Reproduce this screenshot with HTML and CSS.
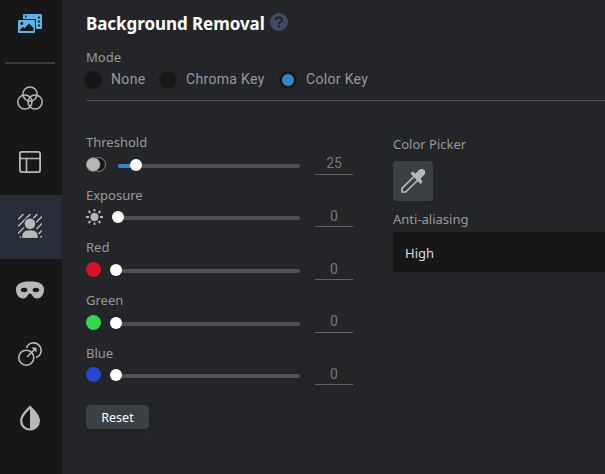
FILE: index.html
```html
<!DOCTYPE html>
<html lang="en">
<head>
<meta charset="utf-8">
<title>Background Removal</title>
<link rel="stylesheet" href="styles.css">
</head>
<body>
<div class="app">
  <nav class="sidebar">
    <div class="nav-top">
      <svg width="24" height="20" viewBox="0 0 24 20"><path fill="#5cb3e6" fill-rule="evenodd" d="M6 0h17q1 0 1 1v13q0 1-1 1h-5V6q0-1-1-1H5V1q0-1 1-1zM7 1.500v2h1.500v-2zM20 2.500v2h1.800v-2zM20 6.500v2h1.800v-2zM20 10.500v2h1.800v-2z"/><path fill="#5cb3e6" fill-rule="evenodd" d="M1 6h15q1 0 1 1v11q0 1-1 1H1q-1 0-1-1V7q0-1 1-1zM3.800 8a1.500 1.500 0 1 0 .01 0zM2 17h13.500v-3L11 9.500l-4.500 4.800-1.500-1.300L2 15.500z"/></svg>
    </div>
    <div class="nav-item">
      <svg width="26" height="24" viewBox="0 0 26 24" fill="none" stroke="#b8b8b8" stroke-width="1.500"><circle cx="13" cy="8" r="7.100"/><circle cx="7.900" cy="16" r="7.100"/><circle cx="18.100" cy="16" r="7.100"/></svg>
    </div>
    <div class="nav-item">
      <svg width="22" height="22" viewBox="0 0 22 22" fill="none" stroke="#b8b8b8"><rect x=".9" y=".9" width="20.200" height="20.200" rx="2" stroke-width="1.800"/><path d="M1 7.500h20M7.500 8v13" stroke-width="1.600"/></svg>
    </div>
    <div class="nav-item selected">
      <svg width="24" height="24" viewBox="0 0 24 24"><path stroke="#b8b8b8" stroke-width="1.500" d="M0 5.500L5.500 0M0 12.500L12.500 0M0 19.500L6 13.500M15 4.500L19.500 0M18 8.500L24 2.500M18.500 15L24 9.500M20.500 20L24 16.500M2 23.500l1-1M22.500 23.500L24 22"/><circle cx="12" cy="9.500" r="6.200" fill="#262d39"/><circle cx="12" cy="9.700" r="5.300" fill="#b8b8b8"/><path fill="#b8b8b8" stroke="#262d39" stroke-width=".5" d="M4 24.300v-2Q4 16 12 16t8 6.300v2z"/></svg>
    </div>
    <div class="nav-item">
      <svg width="28" height="18" viewBox="0 0 28 18"><path fill="#b8b8b8" fill-rule="evenodd" d="M14 .5C23 .5 28 3 28 8.500c0 5-3 9-7 9-3 0-4-2-5.300-4-.8-1.200-2.600-1.200-3.400 0C11 15.500 10 17.500 7 17.500c-4 0-7-4-7-9C0 3 5 .5 14 .5zM4.500 9q.8 2.300 3.600 2.300T11.700 9Q10.900 6.700 8.100 6.700T4.500 9zM16.300 9q.8 2.300 3.600 2.300T23.500 9Q22.700 6.700 19.900 6.700T16.300 9z"/></svg>
    </div>
    <div class="nav-item">
      <svg width="24" height="24" viewBox="0 0 24 24" fill="none" stroke="#b8b8b8" stroke-width="1.600"><circle cx="8.300" cy="15.700" r="7.500"/><path d="M8.500 6A7.500 7.500 0 1 1 18 15.500M9 15L17 7"/><path d="M13.500 5.500H18.500V10.500z" fill="#b8b8b8" stroke="none"/></svg>
    </div>
    <div class="nav-item">
      <svg width="22" height="26" viewBox="0 0 22 26"><path fill="#b8b8b8" fill-rule="evenodd" d="M11 .5C15 4.500 21 10 21 16a10 9.500 0 0 1-20 0C1 10 7 4.500 11 .5zM11 4C7 8 3.300 11.800 3.300 16a7.700 7.400 0 0 0 7.700 7.400z"/></svg>
    </div>
  </nav>
  <main class="panel">
    <h1 class="title">Background Removal
      <svg width="18" height="18" viewBox="0 0 18 18"><circle cx="9" cy="9" r="9" fill="#414b68"/><path d="M6 7Q6 4.300 9 4.300T12 7Q12 8.300 10.500 9T9 11.200" fill="none" stroke="#20232b" stroke-width="1.900"/><rect x="8" y="12.300" width="2" height="2" fill="#20232b"/></svg>
    </h1>
    <div class="label mode-label">Mode</div>
    <div class="modes">
      <label class="mode none"><i class="radio"></i><span>None</span></label>
      <label class="mode chroma"><i class="radio"></i><span>Chroma Key</span></label>
      <label class="mode"><i class="radio checked"></i><span>Color Key</span></label>
    </div>
    <div class="columns">
      <section class="sliders">
        <div class="setting">
          <div class="label">Threshold</div>
          <div class="control">
            <svg class="wide-icon" width="20" height="16" viewBox="0 0 20 16"><circle cx="12.500" cy="7.500" r="7" fill="#171717" stroke="#888" stroke-width="1"/><circle cx="7.500" cy="7.500" r="7.500" fill="#171717"/><circle cx="7.200" cy="7.500" r="6.700" fill="#b8b8b8" stroke="#999"/></svg>
            <div class="track far"><i class="fill"></i><i class="thumb"></i></div>
            <div class="value">25</div>
          </div>
        </div>
        <div class="setting tall low-label">
          <div class="label">Exposure</div>
          <div class="control">
            <svg class="wide-icon" width="18" height="16" viewBox="0 0 18 16"><circle cx="8.500" cy="8" r="4" fill="#b8b8b8"/><path d="M8.500 0v2.500M8.500 13.500V16M0 8h3M14 8h3M2.500 2l2 2M12.500 12l2 2M14.500 2l-2 2M4.500 12l-2 2" stroke="#b8b8b8" stroke-width="1.800"/></svg>
            <div class="track far"><i class="thumb"></i></div>
            <div class="value low">0</div>
          </div>
        </div>
        <div class="setting tall">
          <div class="label">Red</div>
          <div class="control"><i class="dot red"></i><div class="track"><i class="thumb"></i></div><div class="value low">0</div></div>
        </div>
        <div class="setting">
          <div class="label">Green</div>
          <div class="control"><i class="dot green"></i><div class="track"><i class="thumb"></i></div><div class="value">0</div></div>
        </div>
        <div class="setting low-label">
          <div class="label">Blue</div>
          <div class="control"><i class="dot blue"></i><div class="track"><i class="thumb"></i></div><div class="value low">0</div></div>
        </div>
        <button class="reset">Reset</button>
      </section>
      <section class="options">
        <div class="label">Color Picker</div>
        <button class="picker">
          <svg width="24" height="24" viewBox="0 0 24 24"><path d="M14 6.500L1 19.300V23h3.700L18 10" fill="none" stroke="#b8b8b8" stroke-width="1.700"/><path fill="#b8b8b8" d="M9.500 4.500l2-2 3 2L18 1q3-2.300 5.200 0t0 5L19.500 9.500l2 3.500-2 2z"/></svg>
        </button>
        <div class="label aliasing">Anti-aliasing</div>
        <div class="select">High</div>
      </section>
    </div>
  </main>
</div>
</body>
</html>
```
FILE: styles.css
```css
* { box-sizing: border-box; }
body { margin: 0; background: #242529; color: #999; font-family: "Noto Sans", sans-serif; font-size: 13px; overflow: hidden; }
svg { display: block; flex: none; }
button { border: 0; padding: 0; font: inherit; }
.app { display: flex; width: 605px; height: 474px; }
.sidebar { width: 62px; flex: none; background: #171717; }
.nav-top { height: 67px; padding: 14px 0 0 18px; }
.nav-top::after { content: ""; display: block; width: 50px; height: 2px; margin: 28px 0 0 -13px; background: #3d3d3d; }
.nav-item { height: 64px; display: flex; align-items: center; justify-content: center; padding: 0 2px 2px 0; }
.nav-item.selected { background: #262d39; }
.panel { flex: 1; min-width: 0; padding: 11px 0 0 24px; }
.title { display: flex; gap: 5px; align-items: center; height: 24px; margin: 0; color: #fff; font-size: 17px; font-weight: 700; letter-spacing: -.06px; white-space: nowrap; }
.title svg { margin-top: -2px; }
.label { height: 20px; line-height: 20px; white-space: nowrap; }
.mode-label { margin-top: 12px; }
.modes { display: flex; height: 33px; padding-top: 3px; margin-left: -2px; font: 14px/18px Roboto, sans-serif; letter-spacing: .33px; }
.mode { display: flex; height: 18px; gap: 9px; white-space: nowrap; }
.mode.none { width: 75px; }
.mode.chroma { width: 120px; }
.radio { width: 18px; height: 18px; border-radius: 50%; background: #171717; flex: none; margin-top: 1px; }
.radio.checked { background: #3388ca; border: 3px solid #171717; }
.columns { display: flex; border-top: 1px solid #48494b; height: 374px; padding-top: 31px; }
.sliders { width: 307px; flex: none; }
.setting { height: 52px; }
.setting.tall { height: 53px; }
.setting:nth-child(1) { height: 52px; }
.setting:nth-child(4) { height: 52px; }
.low-label .label { padding-top: 1px; }
.control { display: flex; width: 267px; height: 23px; align-items: center; }
.wide-icon { margin-top: 2px; }
.track { position: relative; flex: 1; height: 4px; margin: 5px 15px 0; border-radius: 2px; background: #505154; }
.far { margin-left: auto; flex: 0 0 182px; }
.thumb { position: absolute; left: -6px; top: -5px; width: 12px; height: 12px; border-radius: 50%; background: #fff; }
.fill { position: absolute; left: 0; top: 0; width: 18px; height: 4px; border-radius: 2px; background: #3388ca; }
.fill + .thumb { left: 12px; }
.dot { width: 15px; height: 15px; border-radius: 50%; flex: none; margin-top: 2px; }
.red { background: #d51227; }
.green { background: #31d84b; }
.blue { background: #2945d5; }
.value { width: 38px; height: 23px; flex: none; border-bottom: 1px solid #616265; color: #777; text-align: center; font: 14px/22px Roboto, sans-serif; }
.value.low { line-height: 24px; }
.reset { display: block; width: 63px; height: 24px; margin-top: 11px; border-radius: 4px; background: #3a4043; color: #fff; box-shadow: 0 2px 4px #0003; font-size: 12.500px; line-height: 26px; }
.options { flex: 1; padding-top: 2px; }
.picker { display: flex; width: 40px; height: 40px; margin-top: 7px; align-items: center; justify-content: center; background: #394043; border-radius: 4px; }
.aliasing { margin-top: 8px; }
.select { height: 40px; margin-top: 3px; padding-left: 12px; border-radius: 3px 0 0 3px; background: #171717; color: #ddd; line-height: 43px; }
```
